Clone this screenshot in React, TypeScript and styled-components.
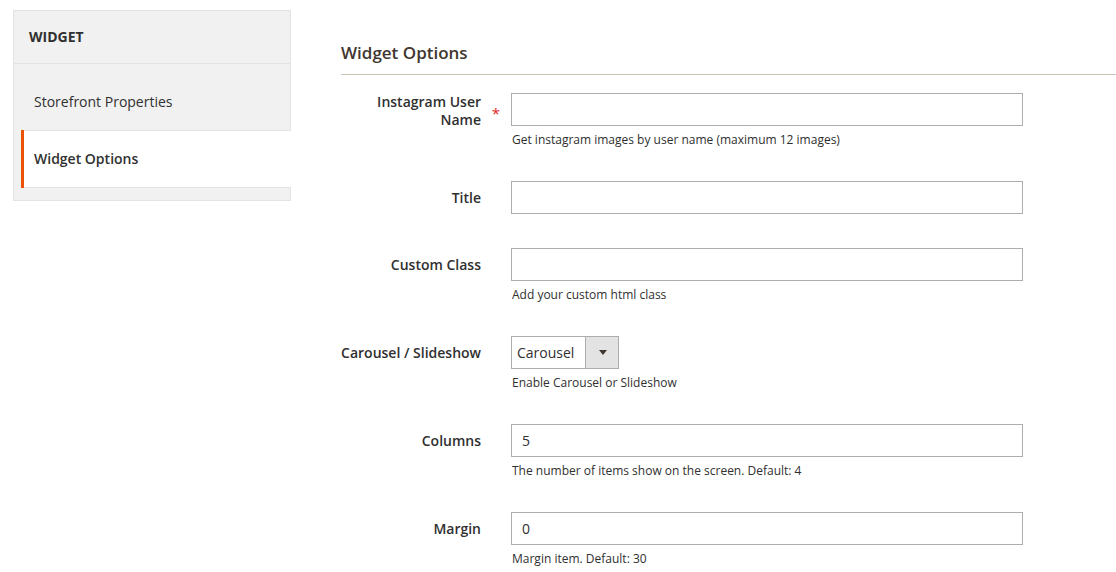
import styled, { createGlobalStyle } from "styled-components";

const GlobalStyle = createGlobalStyle`
    body {
        margin: 0;
        background: #ffffff;
        font-family: "Open Sans", "DejaVu Sans", sans-serif;
        color: #303030;
    }
    * {
        box-sizing: border-box;
    }
`;

const Page = styled.div`
    display: flex;
    align-items: flex-start;
    padding: 10px 0 0 13px;
    overflow: hidden;
`;

const Nav = styled.div`
    width: 278px;
    flex-shrink: 0;
    background: #f1f1f1;
    border: 1px solid #e3e3e3;
`;

const NavTitle = styled.div`
    padding: 18px 15px;
    line-height: 16px;
    font-size: 14px;
    font-weight: 700;
    text-transform: uppercase;
    color: #303030;
    border-bottom: 1px solid #e3e3e3;
`;

const NavItems = styled.ul`
    list-style: none;
    margin: 0;
    padding: 9px 0 13px;
`;

const NavItem = styled.li<{ $active?: boolean }>`
    margin-left: 7px;
    margin-right: ${(p) => (p.$active ? "-1px" : "0")};
    margin-bottom: -1px;
    border-left: 3px solid ${(p) => (p.$active ? "#eb5202" : "transparent")};
    background: ${(p) => (p.$active ? "#ffffff" : "transparent")};

    a {
        display: block;
        padding: 19px 40px 20px 10px;
        line-height: 17px;
        font-size: 14px;
        color: #303030;
        text-decoration: none;
        font-weight: ${(p) => (p.$active ? 600 : 400)};
        border-top: 1px solid ${(p) => (p.$active ? "#e3e3e3" : "transparent")};
        border-bottom: 1px solid ${(p) => (p.$active ? "#e3e3e3" : "transparent")};
    }
`;

const Main = styled.main`
    flex: 1;
    margin-left: 50px;
    min-width: 0;
`;

const SectionTitle = styled.div`
    margin-top: 33px;
    padding-bottom: 11px;
    line-height: 20px;
    font-size: 17px;
    font-weight: 600;
    color: #41362f;
    border-bottom: 1px solid #cac3b4;
`;

const Fields = styled.div`
    display: flex;
    flex-direction: column;
    gap: 34px;
    margin-top: 18px;
`;

const Field = styled.div`
    display: flex;
    align-items: flex-start;
`;

const LabelCell = styled.div`
    display: flex;
    width: 170px;
    flex-shrink: 0;
`;

const Label = styled.label`
    width: 140px;
    min-height: 33px;
    display: flex;
    align-items: center;
    justify-content: flex-end;
    text-align: right;
    font-size: 14px;
    font-weight: 600;
    line-height: 18px;
    color: #303030;
`;

const Mark = styled.span`
    width: 30px;
    text-align: center;
    padding-top: 12px;
    font-size: 15px;
    line-height: 16px;
    color: #e22626;
`;

const Control = styled.div`
    display: flex;
    flex-direction: column;
    align-items: flex-start;
`;

const TextInput = styled.input`
    width: 512px;
    height: 33px;
    padding: 0 10px;
    border: 1px solid #adadad;
    border-radius: 0;
    font-family: inherit;
    font-size: 14px;
    color: #303030;
    background: #ffffff;
    outline: none;
`;

const Select = styled.div`
    display: flex;
    width: 108px;
    height: 33px;
    border: 1px solid #adadad;
    background: #ffffff;
`;

const SelectValue = styled.span`
    flex: 1;
    padding-left: 5px;
    line-height: 31px;
    font-size: 14px;
    color: #303030;
`;

const SelectButton = styled.span`
    width: 33px;
    display: flex;
    align-items: center;
    justify-content: center;
    background: #e3e3e3;
    border-left: 1px solid #adadad;

    &::after {
        content: "";
        border-left: 4.5px solid transparent;
        border-right: 4.5px solid transparent;
        border-top: 5px solid #41362f;
        margin-left: 1px;
    }
`;

const Note = styled.div`
    margin-top: 6px;
    padding-left: 1px;
    font-size: 12px;
    line-height: 15px;
    color: #303030;
`;

type FieldDef = {
    label: string;
    required?: boolean;
    value?: string;
    note?: string;
    select?: boolean;
};

const fields: FieldDef[] = [
    { label: "Instagram User Name", required: true, note: "Get instagram images by user name (maximum 12 images)" },
    { label: "Title" },
    { label: "Custom Class", note: "Add your custom html class" },
    { label: "Carousel / Slideshow", select: true, value: "Carousel", note: "Enable Carousel or Slideshow" },
    { label: "Columns", value: "5", note: "The number of items show on the screen. Default: 4" },
    { label: "Margin", value: "0", note: "Margin item. Default: 30" },
];

function App() {
    return (
        <>
            <GlobalStyle />
            <Page>
                <Nav>
                    <NavTitle>Widget</NavTitle>
                    <NavItems>
                        <NavItem>
                            <a href="#">Storefront Properties</a>
                        </NavItem>
                        <NavItem $active>
                            <a href="#">Widget Options</a>
                        </NavItem>
                    </NavItems>
                </Nav>
                <Main>
                    <SectionTitle>Widget Options</SectionTitle>
                    <Fields>
                        {fields.map((f) => (
                            <Field key={f.label}>
                                <LabelCell>
                                    <Label>{f.label}</Label>
                                    <Mark>{f.required ? "*" : ""}</Mark>
                                </LabelCell>
                                <Control>
                                    {f.select ? (
                                        <Select>
                                            <SelectValue>{f.value}</SelectValue>
                                            <SelectButton />
                                        </Select>
                                    ) : (
                                        <TextInput type="text" defaultValue={f.value ?? ""} />
                                    )}
                                    {f.note && <Note>{f.note}</Note>}
                                </Control>
                            </Field>
                        ))}
                    </Fields>
                </Main>
            </Page>
        </>
    );
}

export default App;
